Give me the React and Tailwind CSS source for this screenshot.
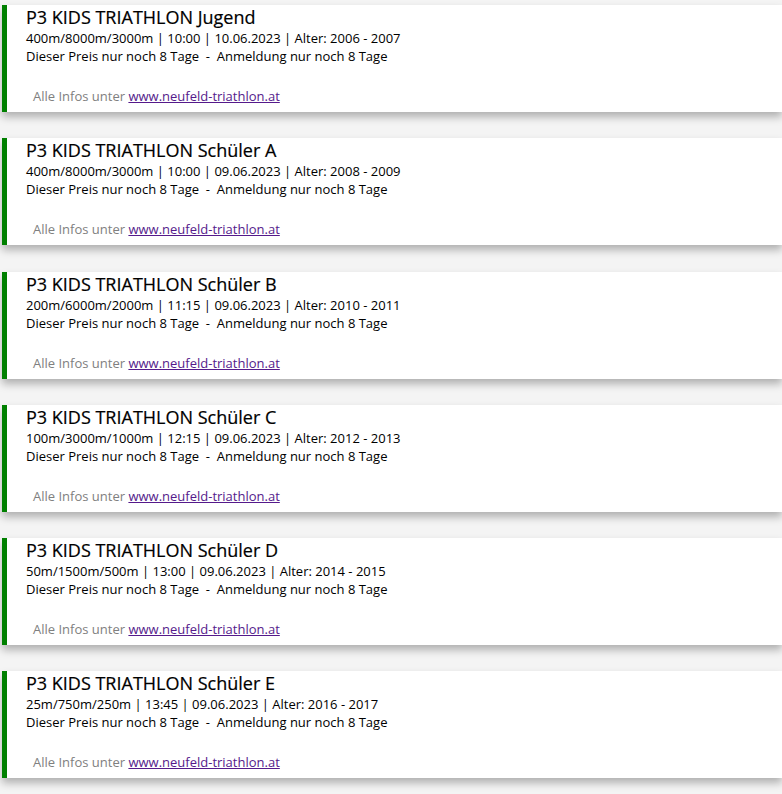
const events = [
  { name: 'Jugend', dist: '400m/8000m/3000m', time: '10:00', date: '10.06.2023', age: '2006 - 2007' },
  { name: 'Schüler A', dist: '400m/8000m/3000m', time: '10:00', date: '09.06.2023', age: '2008 - 2009' },
  { name: 'Schüler B', dist: '200m/6000m/2000m', time: '11:15', date: '09.06.2023', age: '2010 - 2011' },
  { name: 'Schüler C', dist: '100m/3000m/1000m', time: '12:15', date: '09.06.2023', age: '2012 - 2013' },
  { name: 'Schüler D', dist: '50m/1500m/500m', time: '13:00', date: '09.06.2023', age: '2014 - 2015' },
  { name: 'Schüler E', dist: '25m/750m/250m', time: '13:45', date: '09.06.2023', age: '2016 - 2017' },
];

const EventCard = ({ ev }) => (
  <div className="ml-[2px] bg-white border-l-[5px] border-[#008000] shadow-[0_5px_8px_rgba(0,0,0,0.28)] pl-[19px] pb-[7px] h-[107px]">
    <h2 className="text-[18px] leading-[24px] text-black [-webkit-text-stroke:0.2px_black]">P3 KIDS TRIATHLON {ev.name}</h2>
    <p className="text-[13px] leading-[18px] text-black">
      {ev.dist} | {ev.time} | {ev.date} | Alter: {ev.age}
    </p>
    <p className="text-[13px] leading-[18px] text-black whitespace-pre">
      Dieser Preis nur noch 8 Tage  -  Anmeldung nur noch 8 Tage
    </p>
    <p className="mt-[22px] pl-[7px] text-[13px] leading-[18px] text-[#808080]">
      Alle Infos unter <a href="#" className="underline text-[#551a8b]">www.neufeld-triathlon.at</a>
    </p>
  </div>
);

export default function App() {
  return (
    <div className="min-h-screen bg-[#f4f4f4] pt-[5px] font-['Open_Sans',sans-serif]">
      <div className="flex flex-col gap-[26.3px]">
        {events.map((ev) => (
          <EventCard key={ev.name} ev={ev} />
        ))}
      </div>
    </div>
  );
}
